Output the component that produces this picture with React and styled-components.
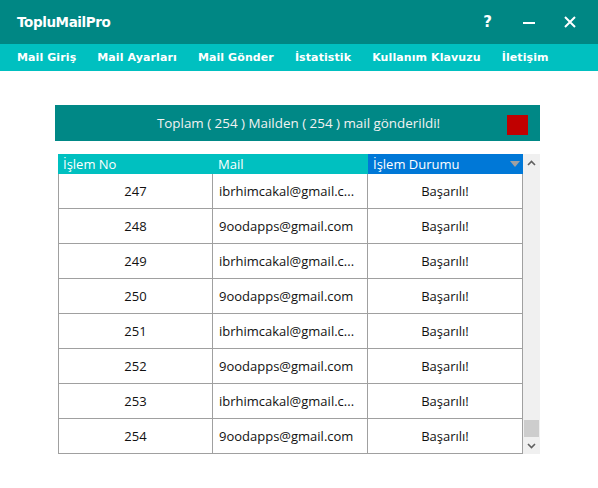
import React from "react";
import styled, { createGlobalStyle } from "styled-components";

const GlobalStyle = createGlobalStyle`
  body {
    margin: 0;
    background: #ffffff;
    font-family: "Open Sans", "Noto Sans", sans-serif;
  }
`;

const rows = [
  { no: 247, mail: "ibrhimcakal@gmail.c...", status: "Başarılı!" },
  { no: 248, mail: "9oodapps@gmail.com", status: "Başarılı!" },
  { no: 249, mail: "ibrhimcakal@gmail.c...", status: "Başarılı!" },
  { no: 250, mail: "9oodapps@gmail.com", status: "Başarılı!" },
  { no: 251, mail: "ibrhimcakal@gmail.c...", status: "Başarılı!" },
  { no: 252, mail: "9oodapps@gmail.com", status: "Başarılı!" },
  { no: 253, mail: "ibrhimcakal@gmail.c...", status: "Başarılı!" },
  { no: 254, mail: "9oodapps@gmail.com", status: "Başarılı!" },
];

const menu = [
  "Mail Giriş",
  "Mail Ayarları",
  "Mail Gönder",
  "İstatistik",
  "Kullanım Klavuzu",
  "İletişim",
];

const App = () => {
  return (
    <>
      <GlobalStyle />
      <Window>
        <TitleBar>
          <Title>TopluMailPro</Title>
          <WindowButtons>
            <WinButton>?</WinButton>
            <WinButton>
              <svg width="14" height="14" viewBox="0 0 14 14">
                <path d="M1 8h12" stroke="#fff" strokeWidth="2" />
              </svg>
            </WinButton>
            <WinButton>
              <svg width="14" height="14" viewBox="0 0 14 14">
                <path d="M2 2l10 10M12 2L2 12" stroke="#fff" strokeWidth="2" />
              </svg>
            </WinButton>
          </WindowButtons>
        </TitleBar>
        <NavBar>
          {menu.map((m) => (
            <NavItem key={m}>{m}</NavItem>
          ))}
        </NavBar>
        <Content>
          <Banner>
            <BannerText>Toplam ( 254 ) Mailden ( 254 ) mail gönderildi!</BannerText>
            <RedBox />
          </Banner>
          <GridWrap>
            <Grid>
              <HeadCell>İşlem No</HeadCell>
              <HeadCell>Mail</HeadCell>
              <HeadCell $active>
                İşlem Durumu
                <SortArrow />
              </HeadCell>
              {rows.map((r) => (
                <React.Fragment key={r.no}>
                  <Cell $first>{r.no}</Cell>
                  <Cell $left>{r.mail}</Cell>
                  <Cell>{r.status}</Cell>
                </React.Fragment>
              ))}
            </Grid>
            <ScrollBar>
              <ScrollArrow>
                <svg width="9" height="6" viewBox="0 0 9 6">
                  <path d="M1 5l3.5-3.5L8 5" stroke="#606060" strokeWidth="1.6" fill="none" />
                </svg>
              </ScrollArrow>
              <ScrollTrack>
                <Thumb />
              </ScrollTrack>
              <ScrollArrow>
                <svg width="9" height="6" viewBox="0 0 9 6">
                  <path d="M1 1l3.5 3.5L8 1" stroke="#606060" strokeWidth="1.6" fill="none" />
                </svg>
              </ScrollArrow>
            </ScrollBar>
          </GridWrap>
        </Content>
      </Window>
    </>
  );
};

const Window = styled.div`
  width: 598px;
  height: 488px;
  background: #ffffff;
`;

const TitleBar = styled.div`
  height: 44px;
  background: #008784;
  display: flex;
  align-items: center;
  justify-content: space-between;
  padding: 0 8px 0 17px;
  box-sizing: border-box;
`;

const Title = styled.div`
  color: #ffffff;
  font-family: "DejaVu Sans", sans-serif;
  font-weight: bold;
  font-size: 13.5px;
  letter-spacing: -0.4px;
`;

const WindowButtons = styled.div`
  display: flex;
  height: 100%;
`;

const WinButton = styled.div`
  width: 41px;
  display: flex;
  align-items: center;
  justify-content: center;
  color: #ffffff;
  font-family: "DejaVu Sans", sans-serif;
  font-weight: bold;
  font-size: 15px;
`;

const NavBar = styled.div`
  height: 27px;
  background: #00c0c0;
  display: flex;
  align-items: center;
  gap: 21px;
  padding-left: 17px;
`;

const NavItem = styled.div`
  color: #ffffff;
  font-family: "DejaVu Sans", sans-serif;
  font-weight: bold;
  font-size: 11px;
  letter-spacing: 0.1px;
`;

const Content = styled.div`
  padding: 34px 0 0 55px;
`;

const Banner = styled.div`
  width: 485px;
  height: 36px;
  background: #008886;
  display: flex;
  align-items: center;
  justify-content: center;
  position: relative;
`;

const BannerText = styled.div`
  color: #f2f2f2;
  font-size: 13.4px;
  margin-left: 2px;
`;

const RedBox = styled.div`
  position: absolute;
  right: 12px;
  top: 10px;
  width: 21px;
  height: 20px;
  background: #c00000;
`;

const GridWrap = styled.div`
  margin: 13px 0 0 3px;
  display: flex;
  width: 482px;
`;

const Grid = styled.div`
  display: grid;
  grid-template-columns: 155px 155px 155px;
  grid-template-rows: 20px repeat(8, 35px);
  width: 465px;
  font-size: 13px;
`;

const HeadCell = styled.div`
  background: ${(p) => (p.$active ? "#0078d7" : "#00c0c0")};
  color: #ffffff;
  display: flex;
  align-items: center;
  padding-left: 5px;
  font-size: 13px;
  position: relative;
`;

const SortArrow = styled.span`
  position: absolute;
  right: 3px;
  top: 7px;
  width: 0;
  height: 0;
  border-left: 5px solid transparent;
  border-right: 5px solid transparent;
  border-top: 6px solid #a0a0a0;
`;

const Cell = styled.div`
  display: flex;
  align-items: center;
  justify-content: ${(p) => (p.$left ? "flex-start" : "center")};
  padding-left: ${(p) => (p.$left ? "6px" : "0")};
  border-right: 1px solid #a0a0a0;
  border-bottom: 1px solid #a0a0a0;
  border-left: ${(p) => (p.$first ? "1px solid #a0a0a0" : "none")};
  color: #111111;
  white-space: nowrap;
  overflow: hidden;
`;

const ScrollBar = styled.div`
  width: 17px;
  background: #f0f0f0;
  display: flex;
  flex-direction: column;
  height: 300px;
`;

const ScrollArrow = styled.div`
  height: 17px;
  display: flex;
  align-items: center;
  justify-content: center;
`;

const ScrollTrack = styled.div`
  flex: 1;
  display: flex;
  flex-direction: column;
  justify-content: flex-end;
  padding: 0 1px;
`;

const Thumb = styled.div`
  height: 17px;
  background: #cdcdcd;
`;

export default App;
